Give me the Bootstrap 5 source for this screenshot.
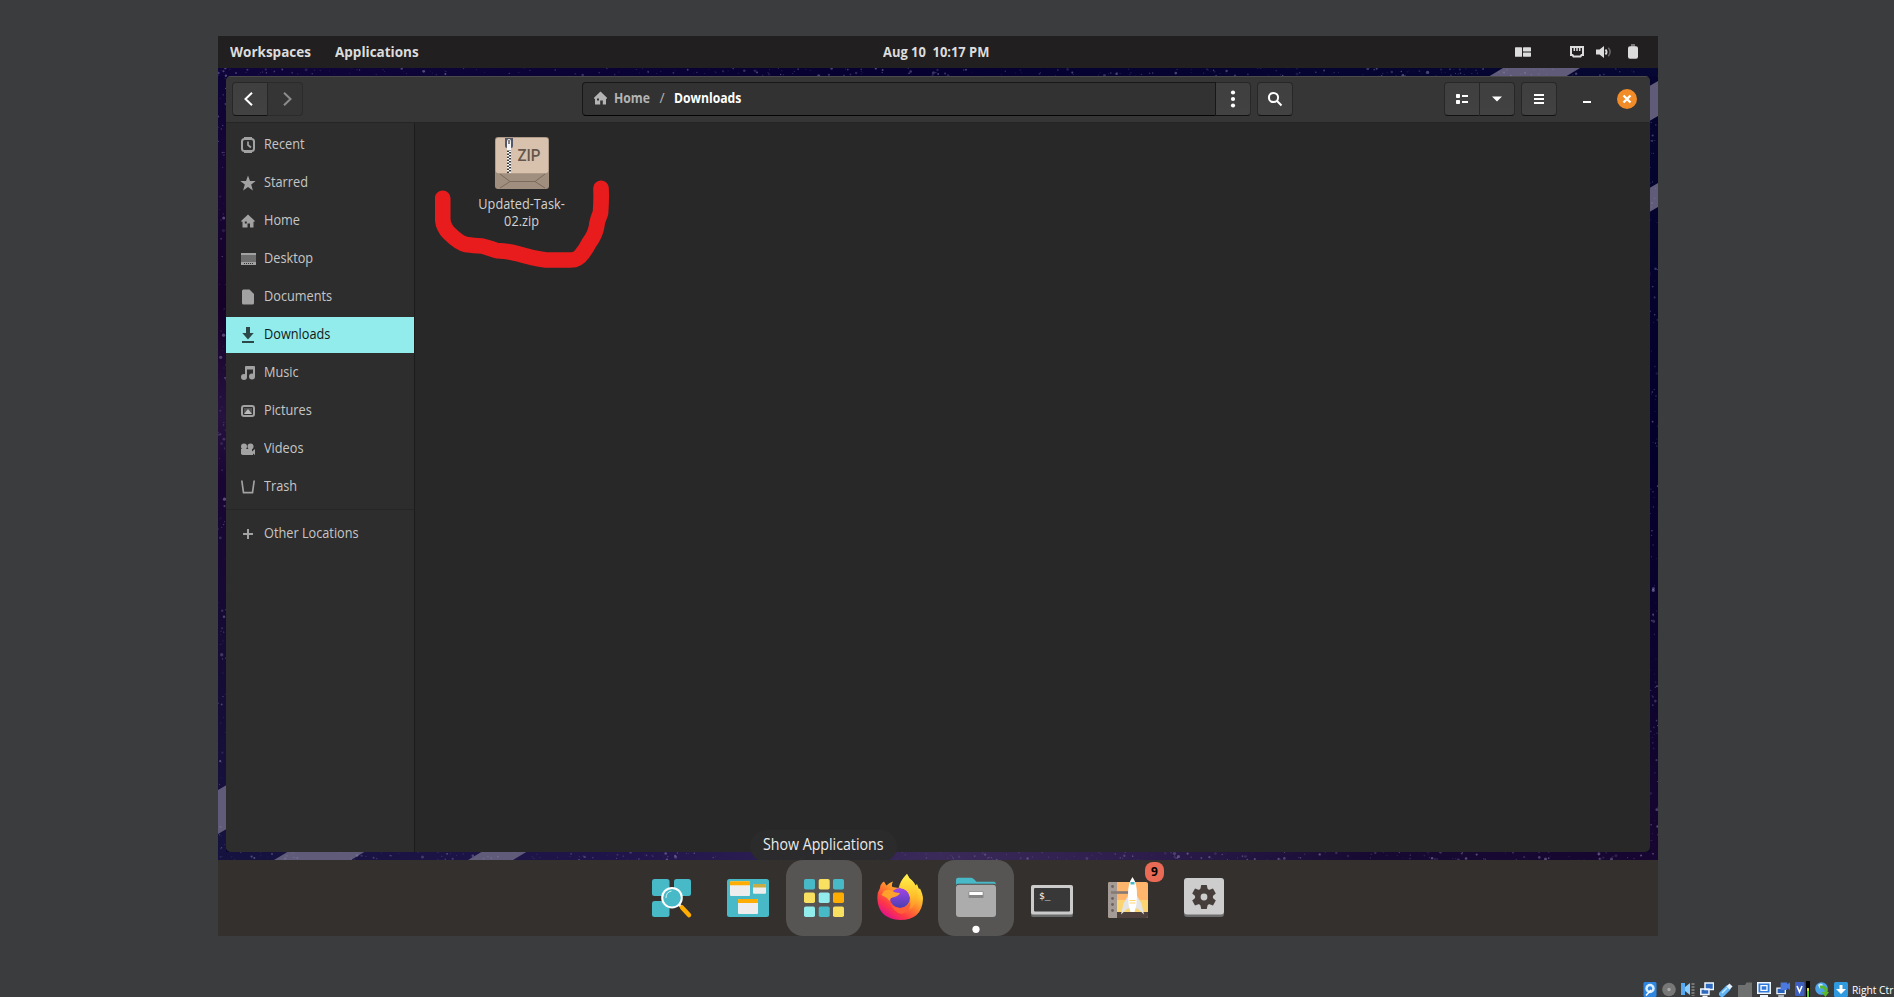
<!DOCTYPE html>
<html lang="en">
<head>
<meta charset="utf-8">
<title>Files - Downloads</title>
<link href="https://cdn.jsdelivr.net/npm/bootstrap@5.3.0/dist/css/bootstrap.min.css" rel="stylesheet">
<style>
body{background:#3b3c3d;height:997px;overflow:hidden;font-family:"Open Sans","Noto Sans",sans-serif;font-size:14.3px;color:#c6c6c6;line-height:18px}
svg{display:block;flex:none}
.narrow{display:inline-block;white-space:pre;transform:scaleX(.89);transform-origin:0 50%}
.screen{width:1440px;height:900px;margin:36px 0 0 218px}
.topbar{height:32px;background:#221f20;color:#dcdcdc;font-weight:700;font-size:14.6px;padding:0 13px 2px 12px}
.topbar .narrow{transform:scaleX(.925)}
.topbar .clock{left:665px;top:6px;transform:scaleX(.885)}
.desk{height:792px;background:#0a0430;padding:8px;overflow:hidden}
.wall{left:0;top:0}
.win{height:776px;border-radius:5px;overflow:hidden;background:#282828}
.head{height:47px;background:#363636;border-top:1px solid #4a4a4a;border-bottom:1px solid #252525;padding:0 13px 1px 6px}
.tool{height:34px;width:36px;padding:0;background:linear-gradient(#3f3f3f,#424242);border:1px solid #272727;border-bottom:1px solid #121212;border-radius:4px;color:#fff}
.tool.off{background:#353535;border-color:#2b2b2b;color:#8c8c8c}
.tool:first-child:not(:last-child){border-radius:4px 0 0 4px}
.tool:last-child:not(:first-child){border-radius:0 4px 4px 0;border-left:0;width:35px}
.crumbs{width:669px;margin-left:279px;margin-right:6px}
.where{height:34px;background:#323232;border:1px solid #171717;border-bottom-color:#050505;border-radius:4px 0 0 4px;font-weight:700;font-size:14px;padding:0 0 2px 11px;color:#b4b4b4}
.where .narrow{transform:scaleX(.87)}
.side{width:189px;background:#2d2d2d;border-right:1px solid #1c1c1c;padding-top:4px}
.side a{height:36px;margin-bottom:2px;padding:0 14px;color:#c6c6c6;text-decoration:none}
.side a span{position:relative;top:-1px}
.side a svg{color:#a2a2a2;margin-right:8px}
.side a.here{background:#93ecec;color:#101818}
.side a.here svg{color:#2d4848}
.side hr{margin:2px 0 6px;border-color:#262626;opacity:1;height:0;border-width:1px 0 0}
.file{width:110px;margin:14px 0 0 52px;line-height:17px;text-align:center;color:#d2d2d2}
.file .narrow{transform-origin:50% 50%}
.scribble{left:20px;top:50px}
.tip{left:532px;top:762px;width:147px;height:32px;border-radius:16px;background:#2b2b2bf2;color:#ececec;font-size:15.6px;line-height:29px}
.tip .narrow{transform:scaleX(.91);transform-origin:50% 50%}
.dock{height:76px;background:#34302e}
.cell{width:76px;height:76px;border-radius:17px}
.cell.on{background:#575553}
.count{left:55px;top:2px;width:19px;height:20px;border-radius:8px;background:#e96a55;color:#000;font-weight:700;font-size:12px;line-height:20px;text-align:center}
.tray{left:1642.500px;top:981px;gap:5px;color:#fff;font-size:11.5px;line-height:17px;white-space:nowrap}
</style>
</head>
<body class="position-relative">
<main class="screen">
  <nav class="topbar d-flex align-items-center position-relative">
    <span style="width:105px"><span class="narrow">Workspaces</span></span><span class="narrow">Applications</span>
    <span class="clock narrow position-absolute">Aug 10  10:17 PM</span>
    <svg class="ms-auto" width="16" height="12" viewBox="0 0 16 12" fill="#dcdcdc" style="margin-right:39px;margin-top:2px"><rect y="1.300" width="7" height="9.500" rx=".6"/><rect x="8" y="1.300" width="8" height="4.200" rx=".6"/><rect x="8" y="6.500" width="8" height="4.200" rx=".6"/></svg>
    <svg width="14" height="14" viewBox="0 0 14 14" fill="none" stroke="#dcdcdc" stroke-width="2" style="margin-right:12px;margin-top:2px"><path d="M1 2h12v8h-1.500l-1 1.500h-7l-1-1.500H1z" /><path d="M4.300 3v3M7 3v3M9.700 3v3" stroke-width="1.500"/></svg>
    <svg width="17" height="14" viewBox="0 0 17 14" style="margin-right:14px;margin-top:2px"><path d="M0 4.500h3.500L8 1v12L3.500 9.500H0z" fill="#dcdcdc"/><path d="M9.500 4.500q2.200 2.500 0 5" stroke="#dcdcdc" stroke-width="1.800" fill="none"/><path d="M12.300 2.800q3.600 4.200 0 8.400" stroke="#6b6969" stroke-width="1.500" fill="none"/></svg>
    <svg width="12" height="16" viewBox="0 0 12 16" fill="#dcdcdc" style="margin-right:6px;margin-top:1px"><rect x="4" y="0" width="4" height="4" fill="#777"/><rect x="1" y="2.300" width="10" height="12.500" rx="2"/></svg>
  </nav>

  <section class="desk position-relative">
    <svg class="wall position-absolute" width="1440" height="792" viewBox="0 0 1440 792">
      <defs>
        <linearGradient id="gl" x2="0" y2="1"><stop stop-color="#0c0336"/><stop offset=".15" stop-color="#170634"/><stop offset=".3" stop-color="#150029"/><stop offset=".44" stop-color="#26123f"/><stop offset=".52" stop-color="#180533"/><stop offset=".7" stop-color="#150a33"/><stop offset="1" stop-color="#161340"/></linearGradient>
        <linearGradient id="gr" x2="0" y2="1"><stop stop-color="#050530"/><stop offset=".5" stop-color="#04002c"/><stop offset=".85" stop-color="#10052f"/><stop offset="1" stop-color="#170630"/></linearGradient>
        <linearGradient id="gt"><stop stop-color="#10053a"/><stop offset=".5" stop-color="#050030"/><stop offset="1" stop-color="#060732"/></linearGradient>
        <linearGradient id="gb"><stop stop-color="#15123f"/><stop offset=".3" stop-color="#21154b"/><stop offset=".5" stop-color="#3a2a5a"/><stop offset=".65" stop-color="#2b1c4b"/><stop offset=".8" stop-color="#160a32"/><stop offset="1" stop-color="#160631"/></linearGradient>
      </defs>
      <path fill="url(#gl)" d="M0 0h8v792H0z"/><path fill="url(#gr)" d="M1432 0h8v792h-8z"/><rect fill="url(#gt)" width="1440" height="8"/><rect fill="url(#gb)" y="784" width="1440" height="8"/>
      <path fill="#5f5b78" d="M1285 0h77l-20 12h-77zM1428 20l12-7v35l-12 7zM1428 122l12-7v24l-12 7zM0 722l12-7v44l-12 7zM56 792h77l20-12H76zM250 792h45l20-12h-45z"/>
      <g id="stars" fill="#8d86b8"></g>
    </svg>
    <div class="win d-flex flex-column position-relative">
      <header class="head d-flex align-items-center">
        <div class="d-flex">
          <button class="tool d-flex align-items-center justify-content-center"><svg width="16" height="16" viewBox="0 0 16 16" fill="none" stroke="currentColor" stroke-width="2" style="margin-right:3px"><path d="M11 1.800 4.500 8l6.500 6.200"/></svg></button>
          <button class="tool off d-flex align-items-center justify-content-center"><svg width="16" height="16" viewBox="0 0 16 16" fill="none" stroke="currentColor" stroke-width="2" style="margin-left:3px"><path d="M5 1.800 11.500 8 5 14.200"/></svg></button>
        </div>
        <div class="crumbs d-flex">
          <div class="where flex-grow-1 d-flex align-items-center">
            <svg width="13" height="14" viewBox="0 0 13 14" fill="currentColor" style="margin-right:7px"><path d="M6.500.5 13 6.800v1h-1V13.500H8.800V9.500H6.200v4H1V7.800H0v-1z"/><path fill="#323232" d="M3 7.500h2v2H3z"/></svg>
            <span style="width:45.500px"><span class="narrow">Home</span></span><span class="fw-normal">/</span><span class="narrow text-white" style="margin-left:9px">Downloads</span>
          </div>
          <button class="tool d-flex align-items-center justify-content-center"><svg width="6" height="18" viewBox="0 0 6 18" fill="#fff"><circle cx="3" cy="2.500" r="2.100"/><circle cx="3" cy="9" r="2.100"/><circle cx="3" cy="15.500" r="2.100"/></svg></button>
        </div>
        <button class="tool d-flex align-items-center justify-content-center"><svg width="16" height="16" viewBox="0 0 16 16" fill="none" stroke="#fff" stroke-width="2"><circle cx="6.500" cy="6.500" r="4.600"/><path d="m9.800 9.800 4.700 4.700"/></svg></button>
        <div class="d-flex ms-auto">
          <button class="tool d-flex align-items-center justify-content-center"><svg width="14" height="12" viewBox="0 0 14 12" fill="#fff"><rect x="1" y="1" width="4" height="4" rx=".8"/><rect x="1" y="7" width="4" height="4" rx=".8"/><path d="M7 2h6v2H7zM7 8h6v2H7z"/></svg></button>
          <button class="tool d-flex align-items-center justify-content-center"><svg width="10" height="6" viewBox="0 0 10 6" fill="#fff"><path d="M0 .5h10L5 5.500z"/></svg></button>
        </div>
        <button class="tool d-flex align-items-center justify-content-center" style="margin:0 22px 0 6px"><svg width="10" height="12" viewBox="0 0 10 12" fill="#fff"><path d="M0 1h10v2H0zM0 5h10v2H0zM0 9h10v2H0z"/></svg></button>
        <svg width="16" height="16" viewBox="0 0 16 16"><path fill="#fff" d="M4 10h8v2H4z"/></svg>
        <svg width="20" height="20" viewBox="0 0 20 20" style="margin-left:22px"><circle cx="10" cy="10" r="10" fill="#f28c28"/><path d="m6.500 6.500 7 7m0-7-7 7" stroke="#fff" stroke-width="2.300"/></svg>
      </header>

      <div class="d-flex flex-grow-1">
        <nav class="side d-flex flex-column">
          <a href="#" class="d-flex align-items-center"><svg width="16" height="16" viewBox="0 0 16 16" fill="none" stroke="currentColor" stroke-width="2"><rect x="2" y="2" width="12" height="12" rx="2.500"/><path d="M4 1h8M4 15h8" /><path d="M8 4.500V8l3 2.500" stroke-width="1.700"/></svg><span class="narrow">Recent</span></a>
          <a href="#" class="d-flex align-items-center"><svg width="16" height="16" viewBox="0 0 16 16" fill="currentColor"><path d="m8 .5 2 5.500h5.700l-4.500 3.600 1.700 5.900L8 12l-4.900 3.500 1.700-5.900L.3 6H6z"/></svg><span class="narrow">Starred</span></a>
          <a href="#" class="d-flex align-items-center"><svg width="16" height="16" viewBox="0 0 16 16" fill="currentColor"><path d="m8 1.500 6.700 6.300v1h-1.200v5.700H10v-4H7.500v4h-5V8.800H1.300v-1z"/><path fill="#2d2d2d" d="M4.800 8.500h2v2h-2z"/></svg><span class="narrow">Home</span></a>
          <a href="#" class="d-flex align-items-center"><svg width="16" height="16" viewBox="0 0 16 16"><path fill="#6e6e6e" d="M1 3h15v8H1z"/><path fill="currentColor" d="M1 2h15v2H1zM1 11h15v3H1z"/><path stroke="#333" stroke-dasharray="1 1" d="M4 12.500h9"/></svg><span class="narrow">Desktop</span></a>
          <a href="#" class="d-flex align-items-center"><svg width="16" height="16" viewBox="0 0 16 16" fill="currentColor"><path d="M3.500.5h6L14 5v9q0 1.500-1.500 1.500h-9Q2 15.500 2 14V2Q2 .5 3.500.5z"/></svg><span class="narrow">Documents</span></a>
          <a href="#" class="here d-flex align-items-center"><svg width="16" height="16" viewBox="0 0 16 16" fill="currentColor"><path d="M6 0h4v6h3.700L8 12.500 2.300 6H6zM2 14h12v2H2z"/></svg><span class="narrow">Downloads</span></a>
          <a href="#" class="d-flex align-items-center"><svg width="16" height="16" viewBox="0 0 16 16" fill="currentColor"><path d="M5 2q0-1 1-1h8q1 0 1 1v9.500h-2V4.500H7v7.500H5z"/><circle cx="4" cy="12" r="3"/><circle cx="12" cy="11.500" r="3"/></svg><span class="narrow">Music</span></a>
          <a href="#" class="d-flex align-items-center"><svg width="16" height="16" viewBox="0 0 16 16" fill="none" stroke="currentColor"><rect x="2" y="3" width="12" height="10" rx="2" stroke-width="2"/><path fill="#555" stroke="none" d="M4 5h8v6H4z"/><path fill="#bbb" stroke="none" d="m4 11 4-5 4 5z"/></svg><span class="narrow">Pictures</span></a>
          <a href="#" class="d-flex align-items-center"><svg width="16" height="16" viewBox="0 0 16 16" fill="currentColor"><circle cx="4" cy="5.500" r="3"/><circle cx="10.500" cy="5.500" r="3"/><path d="M1 8h11v2.500L15 8v6l-2-1.500V14H2.500L1 13z"/></svg><span class="narrow">Videos</span></a>
          <a href="#" class="d-flex align-items-center"><svg width="16" height="16" viewBox="0 0 16 16" fill="none" stroke="currentColor" stroke-width="1.700"><path d="M1.800 1.500 3.500 13.700h9L14.200 1.500"/></svg><span class="narrow">Trash</span></a>
          <hr>
          <a href="#" class="d-flex align-items-center"><svg width="16" height="16" viewBox="0 0 16 16" stroke="currentColor" stroke-width="2"><path d="M3 8h10M8 3v10"/></svg><span class="narrow">Other Locations</span></a>
        </nav>
        <section class="flex-grow-1 position-relative">
          <div class="file">
            <svg class="mx-auto" width="54" height="52" viewBox="0 0 54 52" style="margin-bottom:6px">
              <rect width="54" height="52" rx="3" fill="#a08e7e"/><rect x=".7" y=".7" width="52.600" height="35.500" rx="3" fill="#d8c2ad"/>
              <path d="m5 37 10 7.500h25L50 37M15 44.500 5 51M40 44.500 50 51" fill="none" stroke="#7b6a5d"/>
              <path d="M14 12v24" stroke="#fff" stroke-width="4"/><path d="M13 13.500V36" stroke="#3c3939" stroke-width="2" stroke-dasharray="1.500"/><path d="M15 12V36" stroke="#3c3939" stroke-width="2" stroke-dasharray="1.500"/>
              <path d="M10 1h8v8q0 2-2 2h-4q-2 0-2-2z" fill="#555666"/><path d="M12 13V5q0-3 2-3t2 3v8z" fill="#f5f5f5"/><path d="M13.300 3h1.400v4h-1.400z" fill="#555"/>
              <text x="22.500" y="24" textLength="23" lengthAdjust="spacingAndGlyphs" font-size="17" font-family="Roboto" font-weight="500" fill="#65574c">ZIP</text>
            </svg>
            <span class="narrow">Updated-Task-
02.zip</span>
          </div>
          <svg class="scribble position-absolute" width="200" height="110" viewBox="435 173 200 110" fill="none" stroke="#e81c1c" stroke-width="15.700" stroke-linecap="round" stroke-linejoin="round"><path d="M442.700 198.300V219Q443 227 449 233Q459 243 466 244.500Q474 245.700 482 246Q490 248 497 250.700Q508 251.200 516 253.300Q534 258.500 546 260H571Q578 260 582 254Q586 249 589 243Q595 235 596.500 227Q597 221 600.500 213Q601.500 200 601 188.300"/></svg>
        </section>
      </div>
    </div>
    <div class="tip position-absolute d-flex justify-content-center"><span class="narrow">Show Applications</span></div>
  </section>

  <footer class="dock d-flex justify-content-center position-relative">
    <div class="cell"><svg width="76" height="76" viewBox="0 0 76 76"><g fill="#48b9c7"><rect x="18" y="19" width="17.500" height="17" rx="2.500"/><rect x="40" y="19" width="17" height="17" rx="2.500"/><rect x="18" y="41" width="17.500" height="16" rx="2.500"/></g><path d="m45 44.500 4 4" stroke="#eee" stroke-width="2.500"/><path d="m48 47.500 7 7.500" stroke="#ffad00" stroke-width="4.500" stroke-linecap="round"/><circle cx="38" cy="37.700" r="9.800" fill="#48b9c7" stroke="#fff" stroke-width="2"/><path d="M32 38q0-6 5.500-7" stroke="#d6f4f5" fill="none"/></svg></div>
    <div class="cell"><svg width="76" height="76" viewBox="0 0 76 76"><rect x="17" y="19" width="42" height="38" rx="2.500" fill="#48b9c7"/><g fill="#ededed"><rect x="20" y="21.300" width="20" height="14.700" rx="1"/><rect x="43" y="24" width="13" height="9.700" rx="1"/><rect x="28" y="39" width="20" height="15" rx="1"/></g><path fill="#ffad00" d="M20 22q0-.7 1-.7h18q1 0 1 .7v3.300H20zM28 40q0-1 1-1h18q1 0 1 1v3H28z"/><path fill="#c9ac44" d="M43 25q0-1 1-1h11q1 0 1 1v2.500H43z"/></svg></div>
    <div class="cell on"><svg width="76" height="76" viewBox="0 0 76 76"><g fill="#48b9c7"><rect x="18" y="19" width="11" height="10.500" rx="1.800"/><rect x="47" y="19" width="11" height="10.500" rx="1.800"/><rect x="32.700" y="46.500" width="11" height="10.500" rx="1.800"/></g><g fill="#fae060"><rect x="32.700" y="19" width="11" height="10.500" rx="1.800"/><rect x="18" y="32.500" width="11" height="10.500" rx="1.800"/><rect x="47" y="46.500" width="11" height="10.500" rx="1.800"/></g><g fill="#93ecec"><rect x="32.700" y="32.500" width="11" height="10.500" rx="1.800"/><rect x="18" y="46.500" width="11" height="10.500" rx="1.800"/></g><rect x="47" y="32.500" width="11" height="10.500" rx="1.800" fill="#ffad00"/></svg></div>
    <div class="cell"><svg width="76" height="76" viewBox="0 0 76 76">
      <defs><linearGradient id="fx" x1=".85" y1=".1" x2=".25" y2=".95"><stop stop-color="#fff04a"/><stop offset=".3" stop-color="#ffc22c"/><stop offset=".55" stop-color="#ff7a2e"/><stop offset=".8" stop-color="#ff3647"/><stop offset="1" stop-color="#e31587"/></linearGradient><linearGradient id="fg" x2="0" y2="1"><stop stop-color="#a345e8"/><stop offset="1" stop-color="#4a3fb0"/></linearGradient><linearGradient id="fy" x2="0" y2="1"><stop stop-color="#fff44f"/><stop offset=".6" stop-color="#ffc02a"/><stop offset="1" stop-color="#ff8a2c"/></linearGradient></defs>
      <path fill="url(#fx)" d="M45 14q1.500 4 5 6.500 2.500 2.500 3.500 5l1.500-1.500q1 3 2 5l1-.5q3 6 3 10.500Q60 60 38 60 16 59 15.300 38q0-6 2.700-10 0-4 4-6.500 1 2 2.500 4 3-3 6.500-4-2 4-.5 5.500l6 1q2-8 8.500-14z"/>
      <circle cx="38" cy="38" r="10" fill="url(#fg)"/>
      <path fill="#ffa12b" d="M22 31q4-2 8-.5 2 2 8 2.500-1 2.500-5.500 4-4.500.5-5 4-3-4-8-6z"/>
      <path fill="url(#fy)" d="M45 14q1.500 4 5 6.500 4.500 5 5 10.500 2 13-8 19 3-7 1-13-2-8-10-9 0-7 7-14z"/>
      <path fill="#ff5f36" d="M28 41q2 7 10 7 7 0 10-6 1 9-8 12-9-1-12-13z"/></svg></div>
    <div class="cell on"><svg width="76" height="76" viewBox="0 0 76 76"><path fill="#48b9c7" d="M18 20q0-2.300 2.300-2.300H33q2 0 3 1.500l2.500 2.600H56q1.700 0 1.700 1.700V27H18z"/><rect x="18" y="23.700" width="40" height="8" rx="2" fill="#4b4a49"/><rect x="18" y="24.700" width="40" height="32.300" rx="3" fill="#acacac"/><rect x="30.500" y="31.500" width="15" height="6.500" rx="1" fill="#858585"/><rect x="31.300" y="32" width="13.400" height="3" fill="#fff"/><circle cx="38" cy="69.300" r="3.600" fill="#fff"/></svg></div>
    <div class="cell"><svg width="76" height="76" viewBox="0 0 76 76"><rect x="17" y="26" width="42" height="31" rx="2" fill="#6a6b6b"/><rect x="17" y="25" width="42" height="29.500" rx="2" fill="#cbcbcb"/><rect x="20" y="28" width="36" height="23.500" rx="1" fill="#383838"/><text x="25" y="38.500" font-family="DejaVu Sans Mono" font-size="9.500" fill="#fff">$_</text></svg></div>
    <div class="cell position-relative"><svg width="76" height="76" viewBox="0 0 76 76"><rect x="18" y="22" width="40" height="36" rx="2" fill="#ffb66c"/><path d="M27 40h31v12H27z" fill="#fbd571"/><path d="M27 52h31v4q0 2-2 2H27z" fill="#4d403c"/><path d="M20 22h7v36h-7q-2 0-2-2V24q0-2 2-2z" fill="#a59b96"/><path d="M21 32.500h18" stroke="#887b76" stroke-width="2.700"/><g fill="#6c625f"><circle cx="22.500" cy="26.500" r="1.400"/><circle cx="22.500" cy="38.500" r="1.400"/><circle cx="22.500" cy="44.500" r="1.400"/><circle cx="22.500" cy="50.500" r="1.400"/></g><path fill="#e4e4e4" d="m38.500 35-5 8.500-2.500 11 6.500-6h10l6.500 6-2.500-11-5-8.500z"/><path fill="#fff" d="M42.500 17q5 7 4.500 19 0 9-2.500 16h-4q-2.500-7-2.500-16-.5-12 4.500-19z"/><path fill="#48b9c7" d="M40.500 22h4v2.500h-4z"/><path stroke="#fbd571" d="M39.500 40.500h6M39.500 43h6"/></svg><span class="count position-absolute">9</span></div>
    <div class="cell"><svg width="76" height="76" viewBox="0 0 76 76"><rect x="18" y="20" width="40" height="37" rx="3" fill="#6d6d6d"/><rect x="18" y="18" width="40" height="36.500" rx="3" fill="#cdcdcd"/><g fill="#463e3a"><circle cx="38" cy="37" r="9"/><path id="tooth" d="M35.200 25h5.600l1 5h-7.600zM35.200 49h5.600l1-5h-7.600z"/><use href="#tooth" transform="rotate(60 38 37)"/><use href="#tooth" transform="rotate(120 38 37)"/></g><circle cx="38" cy="37" r="3.400" fill="#cdcdcd"/></svg></div>
  </footer>
</main>

<div class="tray position-absolute d-flex">
  <svg width="14" height="16" viewBox="0 0 14 16"><rect x=".5" y="1" width="13" height="15" rx="1.500" fill="#2f86e0"/><circle cx="7" cy="7.500" r="4.700" fill="#d9efff"/><circle cx="7" cy="7.500" r="2.200" fill="#2f86e0"/><path d="M3 14.500 8 9" stroke="#fff" stroke-width="1.500"/></svg>
  <svg width="14" height="16" viewBox="0 0 14 16"><circle cx="7" cy="8.500" r="6.800" fill="#777"/><circle cx="7" cy="8.500" r="1.700" fill="#aaa"/></svg>
  <svg width="14" height="16" viewBox="0 0 14 16"><path fill="#55a9f0" d="M0 2h4v12H0z"/><path fill="#8ccbff" d="m4 6 5-4v12l-5-4z"/><path stroke="#777" stroke-width="3" stroke-dasharray="2 1" d="M12 2v13"/></svg>
  <svg width="14" height="16" viewBox="0 0 14 16" fill="#2e69bd" stroke="#eef5ff" stroke-width="1.500"><path d="M5 2h8.500v6.500H5zM.8 8H9v5.500H.8zM2.500 15.500h5"/></svg>
  <svg width="14" height="16" viewBox="0 0 14 16"><path d="m3 13 5.500-5.500" stroke="#5fb4f5" stroke-width="6" stroke-linecap="round"/><path d="m9 7 3-3" stroke="#e4f2ff" stroke-width="4.500"/><path d="m3 12 5-5" stroke="#c3e6ff" stroke-width="1.500"/></svg>
  <svg width="14" height="16" viewBox="0 0 14 16" fill="#6f7070"><path d="M0 4h7l1.500-2.500H14V16H0z"/></svg>
  <svg width="14" height="16" viewBox="0 0 14 16"><path fill="#eef5ff" d="M0 1h14v12H0zM3 14h8v2H3z"/><path fill="#2f79d8" d="M1.500 2.500h11v9h-11z"/><path stroke="#fff" stroke-width="1.300" fill="none" d="M4 4.700h6v4.600H4z"/></svg>
  <svg width="14" height="16" viewBox="0 0 15 16"><path fill="#2863bd" stroke="#eef5ff" stroke-width="1.400" d="M1 7h9v6H1z"/><path stroke="#eef5ff" stroke-width="1.400" d="M2.500 15.500h6"/><path fill="#4c79e0" d="M5 1h7v8H5zM12 3l3-2v8l-3-2z"/></svg>
  <svg width="15" height="16" viewBox="0 0 15 16"><rect y="1" width="9.500" height="14" rx="1" fill="#3e5ec0"/><path d="m2 5 2.500 6L7 5" stroke="#fff" stroke-width="1.600" fill="none"/><path fill="#000" d="M11 0h4v16h-4z"/><path fill="#d9e021" d="M12 7h2v3h-2z"/><path fill="#4fd11b" d="M12 10h2v6h-2z"/></svg>
  <svg width="14" height="16" viewBox="0 0 14 16"><circle cx="6.500" cy="7.500" r="6.300" fill="#4ba3e8"/><path d="M3 4q3-3 5 0l-3 4z" fill="#c8ecff"/><path d="M5 6q7-1 6 6" fill="none" stroke="#59b82c" stroke-width="3"/><path fill="#59b82c" d="M6.500 11H14l-3.500 5z"/></svg>
  <svg width="14" height="16" viewBox="0 0 14 16"><rect y="1" width="14" height="15" rx="1.500" fill="#2f9ae0"/><path fill="#fff" d="M5.500 4h3v4H12l-5 5-5-5h3.500z"/></svg>
  <span class="narrow" style="margin-left:-1px">Right Ctr</span>
</div>

<script src="https://cdn.jsdelivr.net/npm/bootstrap@5.3.0/dist/js/bootstrap.bundle.min.js"></script>
<script>
// Scatter faint stars along the visible edges of the wallpaper
let seed = 7;
const rnd = () => (seed = (seed * 16807) % 2147483647) / 2147483647;
let out = '';
const star = (x, y) => { out += `<circle cx="${x.toFixed(1)}" cy="${y.toFixed(1)}" r="${(0.4 + rnd() * rnd() * 1.4).toFixed(2)}" opacity="${(0.15 + rnd() * 0.4).toFixed(2)}"/>`; };
for (let i = 0; i < 260; i++) { star(rnd() * 1440, rnd() * 8); star(rnd() * 1440, 784 + rnd() * 8); }
for (let i = 0; i < 110; i++) { star(rnd() * 8, rnd() * 792); star(1432 + rnd() * 8, rnd() * 792); }
document.getElementById('stars').innerHTML = out;
</script>
</body>
</html>
